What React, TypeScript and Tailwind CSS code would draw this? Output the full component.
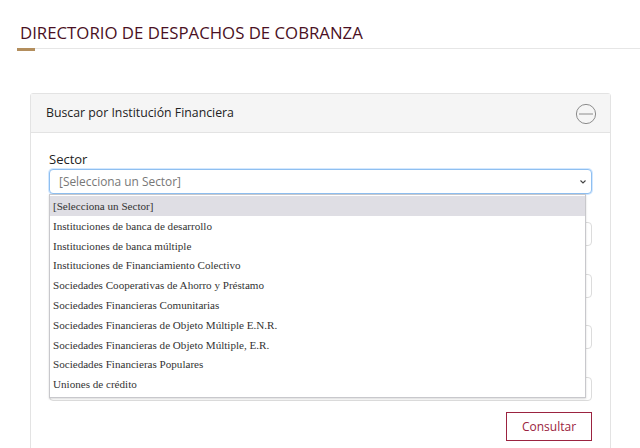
import React from "react";

const options = [
  "[Selecciona un Sector]",
  "Instituciones de banca de desarrollo",
  "Instituciones de banca múltiple",
  "Instituciones de Financiamiento Colectivo",
  "Sociedades Cooperativas de Ahorro y Préstamo",
  "Sociedades Financieras Comunitarias",
  "Sociedades Financieras de Objeto Múltiple E.N.R.",
  "Sociedades Financieras de Objeto Múltiple, E.R.",
  "Sociedades Financieras Populares",
  "Uniones de crédito",
];

function Chevron() {
  return (
    <svg width="8" height="6" viewBox="0 0 8 6" className="shrink-0">
      <path d="M1.5 1.5 L4 4 L6.5 1.5" fill="none" stroke="#444" strokeWidth="1.1" />
    </svg>
  );
}

function FakeControl({ select }: { select?: boolean }) {
  return (
    <div className="h-[24px] border border-[#dcdcdc] rounded-[4px] bg-white flex items-center justify-end pr-[4px]">
      {select ? <Chevron /> : null}
    </div>
  );
}

export default function App() {
  return (
    <div
      className="w-[640px] h-[448px] overflow-hidden bg-white relative"
      style={{ fontFamily: '"Open Sans", "DejaVu Sans", sans-serif' }}
    >
      <div className="pt-[23px] pl-[20px]">
        <h1 className="text-[16.8px] font-medium leading-[20px] text-[#4a1023]">
          DIRECTORIO DE DESPACHOS DE COBRANZA
        </h1>
      </div>
      <div className="ml-[17px] mt-[5px] border-t border-[#e6e6e6]">
        <div className="w-[18px] h-[3px] bg-[#b38e5d] -mt-px" />
      </div>

      <div className="ml-[30px] w-[581px] mt-[42px] border border-[#e3e3e3] rounded-t-[3px]">
        <div className="h-[39px] bg-[#f5f5f5] border-b border-[#e3e3e3] flex items-center justify-between pl-[15px] pr-[13px]">
          <span className="text-[12.3px] text-[#222] mt-[1px]">Buscar por Institución Financiera</span>
          <svg width="22" height="22" viewBox="0 0 22 22" className="mt-[1px]">
            <circle cx="11" cy="11" r="9.6" fill="none" stroke="#8c8c8c" strokeWidth="1" />
            <line x1="4" y1="11" x2="18" y2="11" stroke="#8c8c8c" strokeWidth="1" />
          </svg>
        </div>
        <div className="px-[18px] pt-[17px] pb-[20px]">
          <div className="relative">
            <label className="block text-[13px] leading-[18px] text-[#222] mb-[1px]">Sector</label>
            <div className="h-[25px] border border-[#8fbff0] rounded-[4px] bg-white shadow-[0_0_0_1px_rgba(128,189,255,0.35)] flex items-center justify-between pl-[9px] pr-[4px]">
              <span className="text-[11.9px] text-[#777]">[Selecciona un Sector]</span>
              <Chevron />
            </div>

            <div className="mt-[28px]">
              <FakeControl />
            </div>
            <div className="mt-[28px]">
              <FakeControl select />
            </div>
            <div className="mt-[27px]">
              <FakeControl select />
            </div>
            <div className="mt-[28px]">
              <FakeControl />
            </div>

            <div className="flex justify-end mt-[11px]">
              <button className="w-[86px] h-[29px] border border-[#9b2340] text-[#9b2340] text-[12px] bg-white">
                Consultar
              </button>
            </div>

            <div
              className="absolute left-0 top-[44px] w-[537px] bg-white border border-[#c8c8cc] shadow-[0_1px_2px_rgba(0,0,0,0.15)] pt-px pb-[3px]"
              style={{ fontFamily: '"Liberation Serif", serif' }}
            >
              {options.map((o, i) => (
                <div
                  key={o}
                  className={
                    "h-[19.8px] leading-[20px] pl-[3px] text-[11.1px] text-[#333] " +
                    (i === 0 ? "bg-[#dfdee4] text-[#111]" : "")
                  }
                >
                  {o}
                </div>
              ))}
            </div>
          </div>
        </div>
      </div>
    </div>
  );
}
